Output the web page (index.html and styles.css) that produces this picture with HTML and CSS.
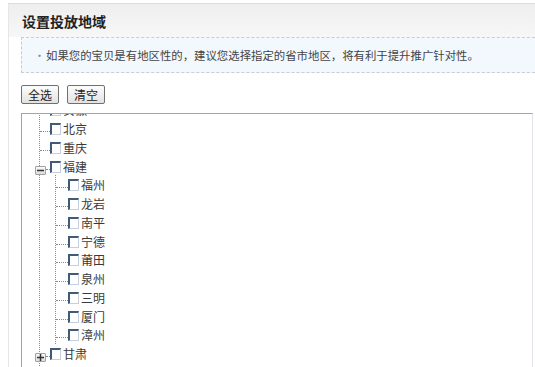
FILE: index.html
```html
<!DOCTYPE html>
<html lang="zh-CN">
<head>
    <meta charset="UTF-8">
    <title>设置投放地域</title>
    <link rel="stylesheet" href="styles.css">
</head>
<body>
    <div class="panel">
        <div class="panel-head">
            <h2 class="title">设置投放地域</h2>
        </div>
        <div class="panel-body">
            <div class="tip">
                <span class="dot">•</span>如果您的宝贝是有地区性的，建议您选择指定的省市地区，将有利于提升推广针对性。
            </div>

            <div class="actions">
                <button class="btn">全选</button>
                <button class="btn">清空</button>
            </div>

            <div class="tree-box">
                <ul class="tree">
                    <li><div class="row"><span class="line"></span><span class="check"></span><span class="label">安徽</span></div></li>
                    <li><div class="row"><span class="line"></span><span class="check"></span><span class="label">北京</span></div></li>
                    <li><div class="row"><span class="line"></span><span class="check"></span><span class="label">重庆</span></div></li>
                    <li>
                        <div class="row"><span class="toggle"><svg width="7" height="7" viewBox="0 0 7 7"><path d="M0 3.5h7" stroke="#333" stroke-width="1.5"/></svg></span><span class="line short"></span><span class="check"></span><span class="label">福建</span></div>
                        <ul class="sub">
                            <li><div class="row"><span class="line wide"></span><span class="check"></span><span class="label">福州</span></div></li>
                            <li><div class="row"><span class="line wide"></span><span class="check"></span><span class="label">龙岩</span></div></li>
                            <li><div class="row"><span class="line wide"></span><span class="check"></span><span class="label">南平</span></div></li>
                            <li><div class="row"><span class="line wide"></span><span class="check"></span><span class="label">宁德</span></div></li>
                            <li><div class="row"><span class="line wide"></span><span class="check"></span><span class="label">莆田</span></div></li>
                            <li><div class="row"><span class="line wide"></span><span class="check"></span><span class="label">泉州</span></div></li>
                            <li><div class="row"><span class="line wide"></span><span class="check"></span><span class="label">三明</span></div></li>
                            <li><div class="row"><span class="line wide"></span><span class="check"></span><span class="label">厦门</span></div></li>
                            <li><div class="row"><span class="line wide"></span><span class="check"></span><span class="label">漳州</span></div></li>
                        </ul>
                    </li>
                    <li><div class="row"><span class="toggle"><svg width="7" height="7" viewBox="0 0 7 7"><path d="M0 3.5h7M3.5 0v7" stroke="#333" stroke-width="1.5"/></svg></span><span class="line short"></span><span class="check"></span><span class="label">甘肃</span></div></li>
                    <li><div class="row"><span class="toggle"><svg width="7" height="7" viewBox="0 0 7 7"><path d="M0 3.5h7M3.5 0v7" stroke="#333" stroke-width="1.5"/></svg></span><span class="line short"></span><span class="check"></span><span class="label">广东</span></div></li>
                </ul>
            </div>
        </div>
    </div>
</body>
</html>
```

FILE: styles.css
```css
html, body {
    margin: 0;
    padding: 0;
    background: #fff;
    overflow: hidden;
}

body {
    font-family: "Noto Sans CJK SC", "Noto Sans", sans-serif;
    font-size: 12px;
    color: #333;
    width: 535px;
    height: 367px;
}

.panel {
    margin: 3px 0 0 8px;
    border-top: 1px solid #dcdcdc;
    border-left: 1px solid #e6e6e6;
    width: 600px;
}

.panel-head {
    height: 33px;
    background: linear-gradient(#eeeeee, #f7f7f7);
    padding-left: 13px;
}

.title {
    margin: 0;
    font-size: 14px;
    font-weight: 700;
    line-height: 34px;
    color: #222;
}

.panel-body {
    padding-left: 12px;
}

.tip {
    width: 560px;
    height: 34px;
    line-height: 34px;
    border: 1px dashed #c9ced6;
    background: #f2f8fe;
    padding-left: 12px;
    color: #444;
    font-size: 11.4px;
    box-sizing: content-box;
    white-space: nowrap;
}

.dot {
    display: inline-block;
    width: 12px;
    color: #888;
    font-size: 11px;
}

.actions {
    display: flex;
    gap: 8px;
    margin-top: 12px;
}

.btn {
    width: 38px;
    height: 19px;
    padding: 0;
    border: 1px solid #707070;
    border-radius: 2px;
    background: linear-gradient(#fdfdfd, #e2e2e2);
    font-family: inherit;
    font-size: 12px;
    line-height: 17px;
    color: #222;
}

.tree-box {
    margin-top: 9px;
    width: 510px;
    height: 260px;
    border-top: 1px solid #9aa7b8;
    border-left: 1px solid #a4a4a4;
    border-right: 1px solid #e0e4ea;
    overflow: hidden;
}

.tree, .sub {
    list-style: none;
    margin: 0;
    padding: 0;
}

.tree {
    margin: -13.6px 0 0 17px;
    border-left: 1px dotted #8a8a8a;
}

.sub {
    margin-left: 15px;
    border-left: 1px dotted #8a8a8a;
}

.row {
    display: flex;
    align-items: flex-start;
    height: 18.75px;
    padding-top: 4px;
    box-sizing: border-box;
}

.line {
    width: 10px;
    height: 8px;
    border-bottom: 1px dotted #8a8a8a;
    flex-shrink: 0;
}

.line.short {
    width: 4px;
}

.line.wide {
    width: 12px;
}

.toggle {
    display: flex;
    align-items: center;
    justify-content: center;
    width: 9px;
    height: 7px;
    margin: 5px 0 0 -5px;
    border: 1px solid #a2a2a2;
    border-radius: 1px;
    background: linear-gradient(#fafafa, #dcdcdc);
    flex-shrink: 0;
}

.check {
    width: 8px;
    height: 9px;
    border: 1px solid #c6d0dc;
    border-top: 2px solid #3f5b79;
    border-left: 2px solid #3f5b79;
    background: #fff;
    flex-shrink: 0;
}

.label {
    margin-left: 2px;
    line-height: 12px;
    white-space: nowrap;
    color: #3a3a3a;
}
```
